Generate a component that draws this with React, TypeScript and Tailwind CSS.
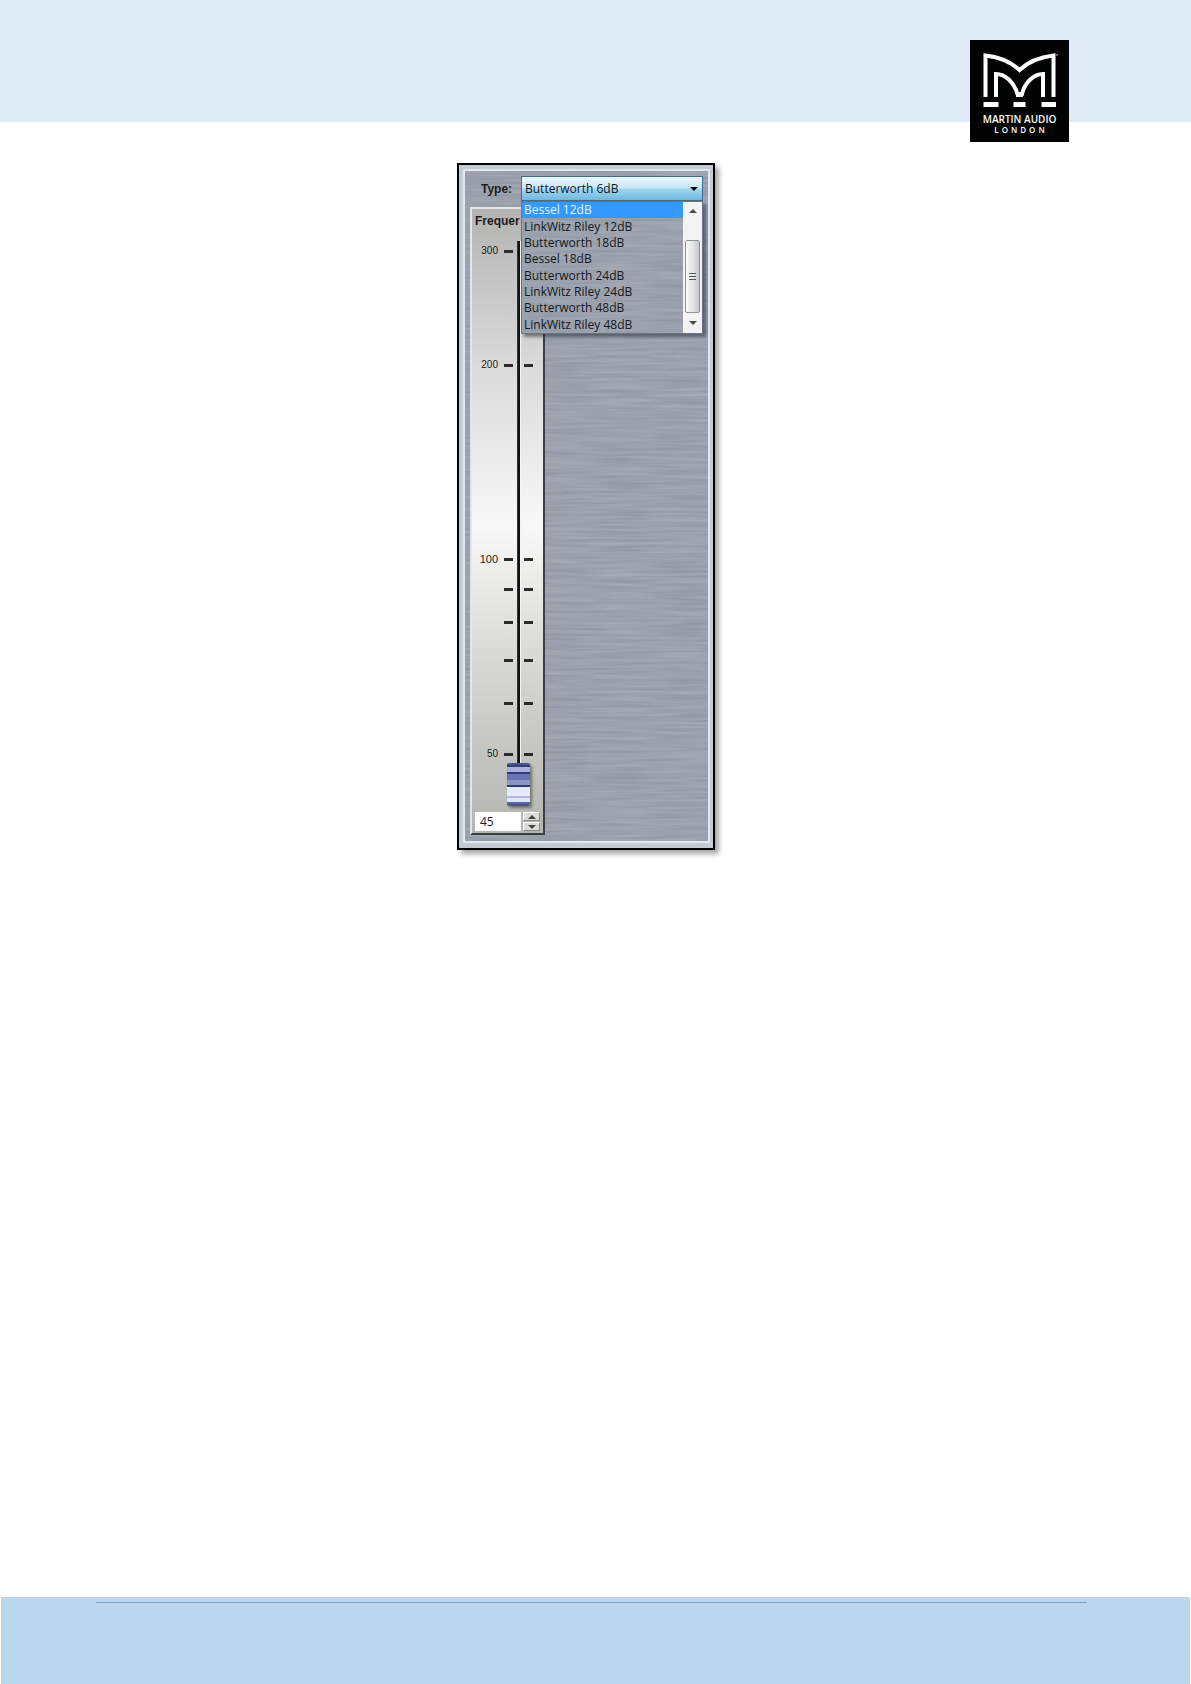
import React, { useState } from 'react';

const FILTER_TYPES = [
  'Bessel 12dB',
  'LinkWitz Riley 12dB',
  'Butterworth 18dB',
  'Bessel 18dB',
  'Butterworth 24dB',
  'LinkWitz Riley 24dB',
  'Butterworth 48dB',
  'LinkWitz Riley 48dB',
];

const MIN_FREQ = 45;
const MAX_FREQ = 300;
const ROW = 12;

const TICKS = [300, 200, 100, 90, 80, 70, 60, 50];
const LABELLED = [300, 200, 100, 50];

// Distance below the 300 mark, 503px down to the 50 mark on a log scale
const tickPos = (t: number) => Math.round((503 * Math.log(MAX_FREQ / t)) / Math.log(MAX_FREQ / 50));

const tickGap = (i: number) => (i === 0 ? 16 : tickPos(TICKS[i]) - tickPos(TICKS[i - 1]) - ROW);

function Logo() {
  return (
    <div className="flex h-[102px] w-[99px] flex-col items-center bg-[#020403] pt-[12px] text-white">
      <svg viewBox="0 0 76 56" className="h-[56px] w-[76px]" fill="none" stroke="currentColor" aria-hidden="true">
        <path d="M3.5 45V3.5C17 5 29 10 37.5 18C46 10 59 5 71.5 3.5V45" strokeWidth="4" />
        <path d="M14 45V22C23 22 32 30 35.5 42H40C43 30 52 22 61 22V45" strokeWidth="4" />
        <path d="M34 42.5H41" strokeWidth="5" />
        <path d="M1.5 52.5H16.5M31.5 52.5H43.5M59.5 52.5H74" strokeWidth="5" />
        <circle cx="75" cy="3" r="0.5" strokeWidth="0.6" />
      </svg>
      <span className="mt-[6px] font-['Open_Sans'] text-[10px] leading-[11px] font-semibold whitespace-nowrap">MARTIN AUDIO</span>
      <span className="pl-[3px] font-['Open_Sans'] text-[8px] leading-[10px] font-semibold tracking-[3px]">LONDON</span>
    </div>
  );
}

function BrushedMetal() {
  return (
    <svg className="absolute inset-0 h-full w-full" aria-hidden="true">
      <filter id="brushed" x="0" y="0" width="100%" height="100%" colorInterpolationFilters="sRGB">
        <feTurbulence type="fractalNoise" baseFrequency="0.016 0.35" numOctaves="3" seed="4" />
        <feColorMatrix values="0.3 0 0 0 0.46  0.3 0 0 0 0.49  0.3 0 0 0 0.54  0 0 0 0 1" />
      </filter>
      <rect width="100%" height="100%" fill="#9ba1ad" />
      <rect width="100%" height="100%" filter="url(#brushed)" opacity="0.35" />
    </svg>
  );
}

function Arrow({ down = false }: { down?: boolean }) {
  return (
    <svg viewBox="0 0 8 4" className="h-[4px] w-[8px]" aria-hidden="true">
      <path d={down ? 'M0 0H8L4 4Z' : 'M0 4H8L4 0Z'} fill="currentColor" />
    </svg>
  );
}

function TypeSelect() {
  const [type, setType] = useState('Butterworth 6dB');
  const [active, setActive] = useState('Bessel 12dB');

  return (
    <div className="relative z-10 flex h-[25px] flex-1 items-center font-['Open_Sans'] text-[12px] text-[#16181c]">
      <select
        id="type"
        value={type}
        onChange={(e) => setType(e.target.value)}
        className="h-full w-full appearance-none border border-[#3b6f92] bg-[linear-gradient(#eaf6fc_0%,#cbe8f7_45%,#9fd3ee_55%,#6fb9dd_100%)] pl-[3px] leading-[16px] outline-none"
      >
        <option>Butterworth 6dB</option>
        {FILTER_TYPES.map((t) => (
          <option key={t}>{t}</option>
        ))}
      </select>
      <span className="pointer-events-none absolute right-[5px] text-black">
        <Arrow down />
      </span>

      {/* Open list */}
      <div className="absolute inset-x-0 top-full flex h-[133px] overflow-hidden border border-[#6d747f] shadow-[3px_3px_3px_rgba(40,45,55,0.55)]">
        <BrushedMetal />
        <ul role="listbox" aria-label="Type" className="relative flex flex-1 flex-col">
          {FILTER_TYPES.map((t) => (
            <li
              key={t}
              role="option"
              aria-selected={t === active}
              onMouseEnter={() => setActive(t)}
              onClick={() => setType(t)}
              className={`flex flex-1 items-center pl-[2px] leading-[16px] whitespace-nowrap ${
                t === active ? 'bg-[#3399ff] text-[#e4f2ff]' : ''
              }`}
            >
              {t}
            </li>
          ))}
        </ul>
        <div className="relative flex w-[19px] flex-col items-center bg-[#f3f3f4] text-[#4a4a4a]">
          <button type="button" aria-label="Scroll up" className="flex h-[18px] w-full items-center justify-center">
            <Arrow />
          </button>
          <div className="mt-5 flex h-[73px] w-[15px] flex-col items-center justify-center gap-[2px] rounded-[2px] border border-[#8f9296] bg-[linear-gradient(to_right,#fafafa,#e6e6e8_50%,#c8c9cc)]">
            <div className="h-px w-[7px] bg-[#55585c]" />
            <div className="h-px w-[7px] bg-[#55585c]" />
            <div className="h-px w-[7px] bg-[#55585c]" />
          </div>
          <button type="button" aria-label="Scroll down" className="flex w-full flex-1 items-center justify-center">
            <Arrow down />
          </button>
        </div>
      </div>
    </div>
  );
}

function FrequencyFader() {
  const [freq, setFreq] = useState(MIN_FREQ);
  const nudge = (n: number) => setFreq((f) => Math.min(MAX_FREQ, Math.max(MIN_FREQ, f + n)));

  return (
    <div className="relative w-[75px] border-2 border-t-[#e3e5e8] border-r-[#3c3e44] border-b-[#3c3e44] border-l-[#e3e5e8] bg-[linear-gradient(#b3b3b2_0%,#dadada_25%,#f8f8f8_51%,#dededb_68%,#c3c3bf_88%,#b5b5b1_100%)] font-['Liberation_Sans'] text-[#1c1c1e]">
      <label htmlFor="fader" className="block h-5 pl-[3px] text-[12px] leading-[24px] font-bold">
        Frequer
      </label>

      <div className="flex h-[577px]">
        <div className="w-[41px]">
          {TICKS.map((t, i) => (
            <div key={t} className="flex h-[12px] items-center justify-end gap-[6px]" style={{ marginTop: tickGap(i) }}>
              {LABELLED.includes(t) && (
                <span className={`leading-[12px] ${t === 100 ? 'text-[11px]' : 'text-[10px]'}`}>{t}</span>
              )}
              <span className="h-[3px] w-[9px] bg-[#2c2c2c]" />
            </div>
          ))}
        </div>

        <div className="flex w-[11px] justify-center">
          <input
            id="fader"
            type="range"
            min={Math.log2(MIN_FREQ)}
            max={Math.log2(MAX_FREQ)}
            step="any"
            value={Math.log2(freq)}
            onChange={(e) => setFreq(Math.round(2 ** Number(e.target.value)))}
            className="relative h-[577px] w-[23px] shrink-0 appearance-none bg-[linear-gradient(to_right,#555_0,#111_1px,#111_3px,#f4f4f4_3px)] bg-[length:4px_565px] bg-bottom bg-no-repeat outline-none [direction:rtl] [writing-mode:vertical-lr] [&::-webkit-slider-thumb]:h-[43px] [&::-webkit-slider-thumb]:w-[23px] [&::-webkit-slider-thumb]:appearance-none [&::-webkit-slider-thumb]:rounded-[2px] [&::-webkit-slider-thumb]:border-x-2 [&::-webkit-slider-thumb]:border-[#4a558c] [&::-webkit-slider-thumb]:bg-[linear-gradient(#35407c_0_2px,#a9b1da_2px_7px,#2f3a76_7px_9px,#6974b2_9px_15px,#8b95c8_15px_20px,#2f3a76_20px_22px,#e6eafa_22px_31px,#b3b8da_31px_33px,#dfe4f6_33px_37px,#5a66a4_37px_39px,#36417c_39px_43px)] [&::-webkit-slider-thumb]:shadow-[2px_2px_3px_rgba(0,0,0,0.4)]"
          />
        </div>

        <div>
          {TICKS.map((t, i) => (
            <div key={t} className="flex h-[12px] items-center" style={{ marginTop: tickGap(i) }}>
              <span className="h-[3px] w-[9px] bg-[#2c2c2c]" />
            </div>
          ))}
        </div>
      </div>

      <div className="mt-[6px] mb-[2px] flex h-[19px] gap-[2px] px-[3px]">
        <input
          type="text"
          aria-label="Frequency in Hz"
          value={freq}
          onChange={(e) => setFreq(Number(e.target.value) || MIN_FREQ)}
          className="w-[46px] bg-white pl-[5px] font-['Open_Sans'] text-[12px] leading-[19px] outline-none"
        />
        <div className="flex flex-1 flex-col gap-px text-[#444]">
          <button
            type="button"
            aria-label="Increase"
            onClick={() => nudge(1)}
            className="flex flex-1 items-center justify-center border border-t-white border-r-[#8a8a8a] border-b-[#8a8a8a] border-l-white bg-[#dcdcda]"
          >
            <Arrow />
          </button>
          <button
            type="button"
            aria-label="Decrease"
            onClick={() => nudge(-1)}
            className="flex flex-1 items-center justify-center border border-t-white border-r-[#8a8a8a] border-b-[#8a8a8a] border-l-white bg-[#dcdcda]"
          >
            <Arrow down />
          </button>
        </div>
      </div>
    </div>
  );
}

export default function App() {
  return (
    <div className="flex min-h-screen flex-col bg-white">
      <header className="flex h-[122px] justify-end bg-[#dfebf6] pt-10 pr-[122px]">
        <Logo />
      </header>

      <main className="flex flex-1 items-start justify-center pt-[41px] pr-[19px]">
        <div className="w-[258px] border-2 border-black bg-[#c6cbd1] pt-[4px] pr-[3px] pb-[5px] pl-[4px] shadow-[4px_4px_5px_rgba(0,0,0,0.35)]">
          <div className="relative border-2 border-[#e4e8ee] pt-[5px] pr-[5px] pb-[6px] pl-[5px]">
            <BrushedMetal />
            <div className="relative z-10 flex items-center">
              <label htmlFor="type" className="w-[51px] pl-[11px] font-['Liberation_Sans'] text-[12px] font-bold text-[#1c1c1e]">
                Type:
              </label>
              <TypeSelect />
            </div>
            <div className="mt-[6px]">
              <FrequencyFader />
            </div>
          </div>
        </div>
      </main>

      <footer className="mx-px h-[87px] border-t border-[#c5d3e2] bg-[#bcd6ed] pt-[4px] pr-[103px] pl-[95px]">
        <hr className="border-[#6fa3d6]" />
      </footer>
    </div>
  );
}
